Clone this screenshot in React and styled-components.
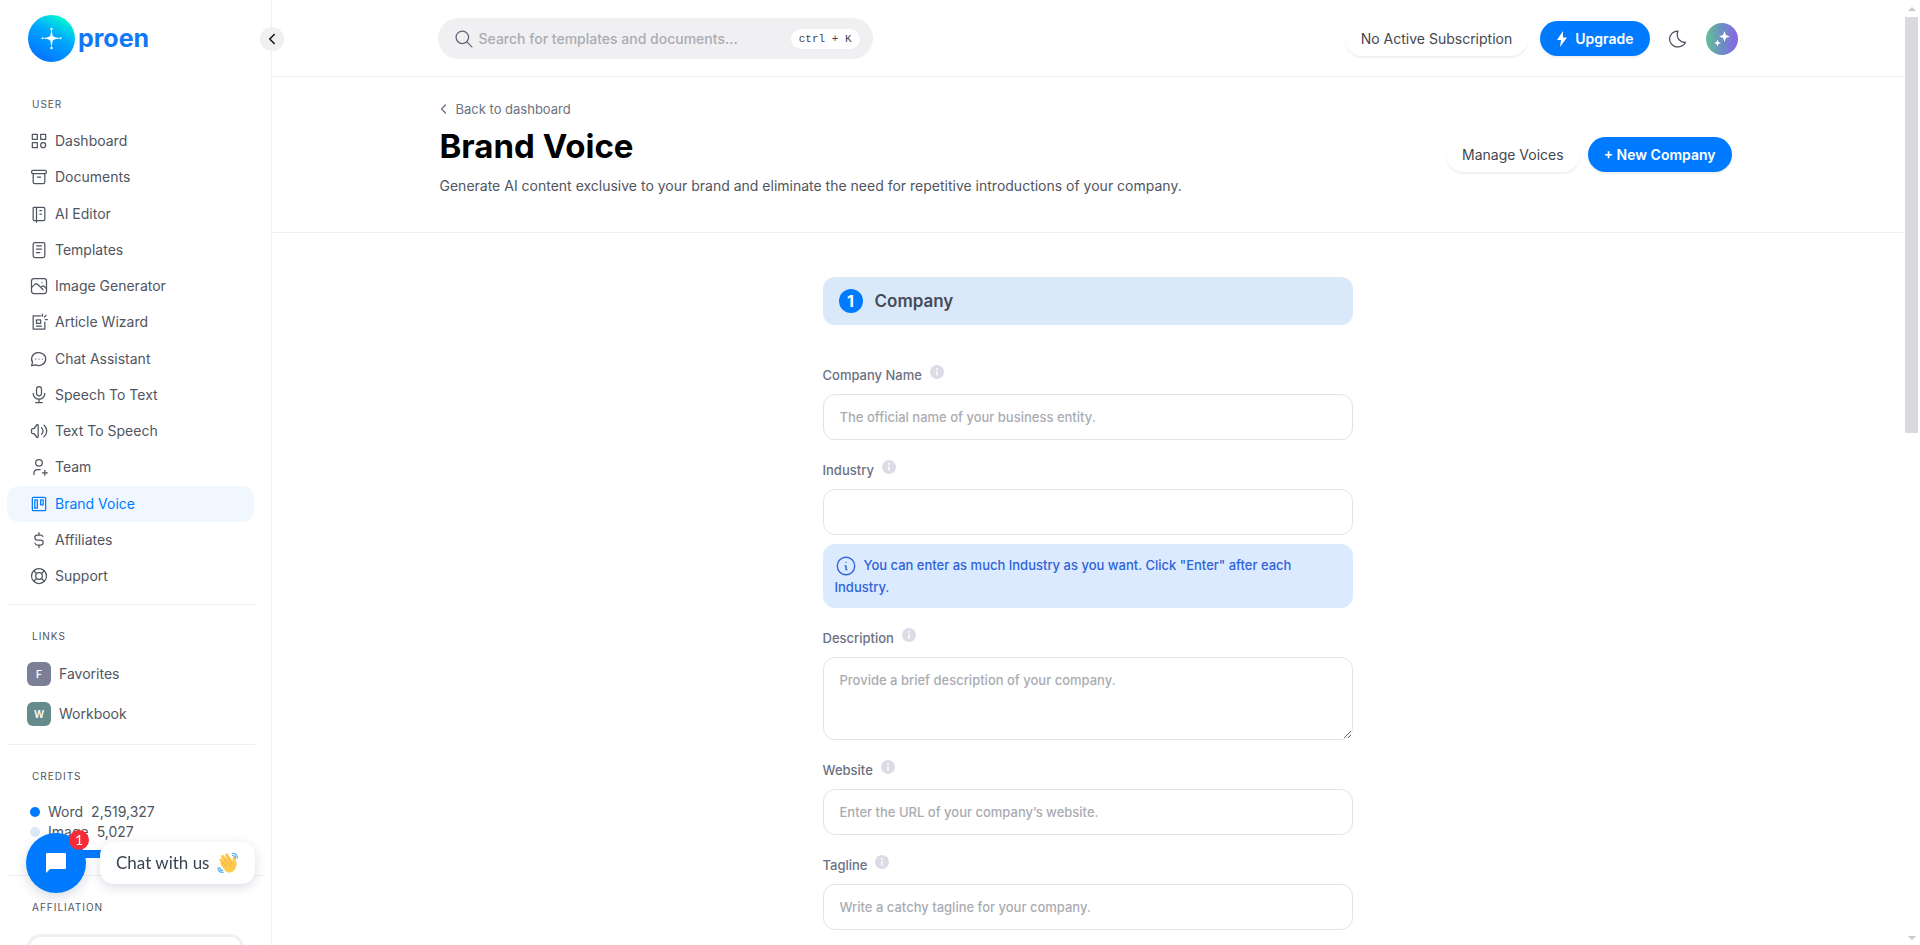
import React, { useState } from 'react';
import styled, { createGlobalStyle } from 'styled-components';

const GlobalStyle = createGlobalStyle`
    * {
        box-sizing: border-box;
    }

    body {
        margin: 0;
        background: #fff;
        color: #50555f;
        font-family: Inter, 'Liberation Sans', sans-serif;
        font-size: 14px;
        line-height: 20px;
        overflow: hidden;
    }

    h1, p, ul {
        margin: 0;
        padding: 0;
    }

    a {
        color: inherit;
        text-decoration: none;
    }

    button, input, textarea {
        font-family: inherit;
    }
`;

const icons = {
    category: (
        <>
            <path d='M4 4h6v6H4zM14 4h6v6h-6zM4 14h6v6H4z' />
            <circle cx='17' cy='17' r='3' />
        </>
    ),
    archive: (
        <>
            <rect x='3' y='4' width='18' height='4' rx='2' />
            <path d='M5 8v10a2 2 0 0 0 2 2h10a2 2 0 0 0 2-2V8M10 12h4' />
        </>
    ),
    notebook: (
        <path d='M6 4h11a2 2 0 0 1 2 2v12a2 2 0 0 1-2 2H6a1 1 0 0 1-1-1V5a1 1 0 0 1 1-1M9 4v18M13 8h2M13 12h2' />
    ),
    notes: (
        <>
            <rect x='5' y='3' width='14' height='18' rx='2' />
            <path d='M9 7h6M9 11h6M9 15h4' />
        </>
    ),
    photo: (
        <>
            <rect x='3' y='3' width='18' height='18' rx='3' />
            <path d='M3 14l4-4c1-.9 2-.9 3 0l4 3.500 1.500-1c1-.9 2-.9 3 0l2.500 3M14 13.500l3 3M15.500 8h.01' />
        </>
    ),
    wizard: (
        <path d='M14 4.500H5V20.500h14V12M9 9.500h5v4H9zM9 17h6M16 5V2.500M18.500 6l2-2M19.500 9H22' />
    ),
    chat: (
        <path d='M3 20l1.300-3.900A8.500 7.800 0 1 1 7.700 19zM8 12h.01M12 12h.01M16 12h.01' />
    ),
    mic: (
        <>
            <rect x='9' y='2' width='6' height='11' rx='3' />
            <path d='M5 10a7 7 0 0 0 14 0M8 21h8M12 17v4' />
        </>
    ),
    speaker: (
        <path d='M3 10.500v3c0 1 .8 1.500 1.500 1.500H6l3.500 4.500c.6.7 1.500.3 1.500-.5V5c0-.8-.9-1.200-1.500-.5L6 9H4.500C3.800 9 3 9.500 3 10.500M15 8c2.400 2 2.400 6 0 8M18 5c4.400 4 4.400 10 0 14' />
    ),
    userPlus: (
        <>
            <circle cx='12' cy='7' r='4' />
            <path d='M6 21v-2a4 4 0 0 1 4-4h3.500M16 19h6M19 16v6' />
        </>
    ),
    trello: (
        <>
            <rect x='4' y='4' width='16' height='16' rx='1.500' />
            <path d='M7 7h3v10H7zM14 7h3v6h-3z' />
        </>
    ),
    dollar: (
        <path d='M16.700 8A3 3 0 0 0 14 6h-4a3 3 0 0 0 0 6h4a3 3 0 0 1 0 6h-4a3 3 0 0 1-2.700-2M12 3v3M12 18v3' />
    ),
    lifebuoy: (
        <>
            <circle cx='12' cy='12' r='4' />
            <circle cx='12' cy='12' r='9' />
            <path d='M15 15l3.350 3.350M9 15l-3.350 3.350M5.650 5.650L9 9M18.350 5.650L15 9' />
        </>
    ),
    search: (
        <>
            <circle cx='10' cy='10' r='7.500' />
            <path d='M21.500 21.500l-6-6' />
        </>
    ),
    chevronLeft: <path d='M15 6l-6 6 6 6' />,
    moon: (
        <path d='M11 2.500a10 9.500 0 1 0 10 13.500c-7 .5-12-6-9-13.500z' />
    ),
    info: (
        <>
            <circle cx='12' cy='12' r='9.500' />
            <path d='M12 8h.01M11 12h1v4h1' />
        </>
    ),
};

const Icon = ({ name, size = 20, width = 1.5 }) => (
    <svg
        width={size}
        height={size}
        viewBox='0 0 24 24'
        fill='none'
        stroke='currentColor'
        strokeWidth={width}
        strokeLinecap='round'
        strokeLinejoin='round'
        aria-hidden='true'
    >
        {icons[name]}
    </svg>
);

const LogoMark = () => (
    <svg width='47' height='47' viewBox='0 0 47 47' aria-hidden='true'>
        <defs>
            <linearGradient id='mark' x1='0.8' y1='0.1' x2='0.3' y2='1'>
                <stop offset='0' stopColor='#00f5d4' />
                <stop offset='0.4' stopColor='#00a6ff' />
                <stop offset='1' stopColor='#0572ff' />
            </linearGradient>
        </defs>
        <circle cx='23.500' cy='23.500' r='23.500' fill='url(#mark)' />
        <g fill='#fff'>
            <path d='M23.500 14l1.200 7 2.300 1.300 5.500 1-5.500 1-2.300 1.200-1.200 7-1.200-7-2.300-1.200-5.500-1 5.500-1 2.300-1.300z' />
            <circle cx='23.500' cy='14' r='1.200' />
            <circle cx='23.500' cy='33' r='1.200' />
            <circle cx='14.500' cy='23.300' r='1' />
            <circle cx='32.500' cy='23.300' r='1' />
        </g>
    </svg>
);

const BackChevron = () => (
    <svg width='7' height='10' viewBox='0 0 7 10' aria-hidden='true'>
        <path
            d='M5.500 1L1.500 5l4 4'
            fill='none'
            stroke='currentColor'
            strokeWidth='1.300'
            strokeLinecap='round'
            strokeLinejoin='round'
        />
    </svg>
);

const InfoDot = () => (
    <svg width='14' height='14' viewBox='0 0 14 14' aria-hidden='true'>
        <circle cx='7' cy='7' r='7' fill='#dcdce6' />
        <circle cx='7' cy='4' r='1' fill='#fff' />
        <path d='M7 6.200v4.300' stroke='#fff' strokeWidth='1.500' />
    </svg>
);

const WavingHand = () => (
    <svg width='22' height='22' viewBox='0 0 22 22' aria-hidden='true'>
        <g stroke='#ffcb4c' strokeWidth='3.200' strokeLinecap='round'>
            <path d='M4 8l6 7M5.500 4.500l7 8M9.500 3l5.500 8' />
            <path d='M17.500 5.500c-1 2 0 4 .5 7' />
        </g>
        <path
            d='M3 11.500l9-6 4 5 3-1c1 4 0 7-2 9-3 3-7 2.500-9 0z'
            fill='#ffcb4c'
        />
        <path
            d='M6.500 6.500l5 6M9.800 4.800l4.200 5.700M5 9.500l5 6M15.500 10.500c-2 1-2.500 3-1.500 5'
            fill='none'
            stroke='#e9a93a'
            strokeWidth='0.800'
        />
        <path
            d='M15 1.500c3-.5 5 1.500 5.500 4.500M15.500 3.500c1.800 0 3 1 3.200 2.800M1 15.500c0 3 2 5 5 5M2.800 15.500c0 1.800 1.200 3 3 3.200'
            fill='none'
            stroke='#5dadec'
            strokeWidth='1.200'
            strokeLinecap='round'
        />
    </svg>
);

const navItems = [
    ['category', 'Dashboard'],
    ['archive', 'Documents'],
    ['notebook', 'AI Editor'],
    ['notes', 'Templates'],
    ['photo', 'Image Generator'],
    ['wizard', 'Article Wizard'],
    ['chat', 'Chat Assistant'],
    ['mic', 'Speech To Text'],
    ['speaker', 'Text To Speech'],
    ['userPlus', 'Team'],
    ['trello', 'Brand Voice'],
    ['dollar', 'Affiliates'],
    ['lifebuoy', 'Support'],
];

const Sidebar = () => (
    <SidebarWrapper>
        <Logo href='#'>
            <LogoMark />
            proen
        </Logo>
        <CollapseButton type='button' aria-label='Collapse sidebar'>
            <Icon name='chevronLeft' size={18} width={2} />
        </CollapseButton>
        <SidebarTitle $first>User</SidebarTitle>
        <NavList>
            {navItems.map(([icon, name]) => (
                <li key={name}>
                    <NavLink href='#' $active={name === 'Brand Voice'}>
                        <Icon name={icon} />
                        {name}
                    </NavLink>
                </li>
            ))}
        </NavList>
        <Divider />
        <SidebarTitle>Links</SidebarTitle>
        <LinkList>
            <li>
                <QuickLink href='#'>
                    <Letter $color='#7b8096'>F</Letter>
                    Favorites
                </QuickLink>
            </li>
            <li>
                <QuickLink href='#'>
                    <Letter $color='#658c8a'>W</Letter>
                    Workbook
                </QuickLink>
            </li>
        </LinkList>
        <Divider />
        <SidebarTitle>Credits</SidebarTitle>
        <Credits>
            <Credit $color='#007bff'>
                Word <span>2,519,327</span>
            </Credit>
            <Credit $color='#dae8f8'>
                Image <span>5,027</span>
            </Credit>
            <CreditBar />
        </Credits>
        <Divider $wide />
        <SidebarTitle>Affiliation</SidebarTitle>
        <AffiliateCard />
    </SidebarWrapper>
);

const Header = () => (
    <HeaderBar>
        <HeaderInner>
            <SearchBox>
                <Icon name='search' />
                <SearchInput
                    type='search'
                    aria-label='Search'
                    placeholder='Search for templates and documents...'
                />
                <Shortcut>ctrl + K</Shortcut>
            </SearchBox>
            <HeaderActions>
                <Button type='button'>No Active Subscription</Button>
                <Button type='button' $primary>
                    <svg width='12' height='16' viewBox='0 0 12 16' aria-hidden='true'>
                        <path d='M7 0L1 9h4l-1 7 7-9.500H7z' fill='currentColor' />
                    </svg>
                    Upgrade
                </Button>
                <IconButton type='button' aria-label='Dark mode'>
                    <Icon name='moon' />
                </IconButton>
                <Avatar type='button' aria-label='Account'>
                    <svg width='18' height='18' viewBox='0 0 18 18' aria-hidden='true'>
                        <path
                            d='M11.500 1l1.400 4 4.100 1.500-4.100 1.500-1.400 4-1.400-4L6 6.500 10.100 5zM4.500 9.500l.9 2.600 2.600.9-2.600.9-.9 2.600-.9-2.600L1 13l2.600-.9z'
                            fill='#fff'
                        />
                    </svg>
                </Avatar>
            </HeaderActions>
        </HeaderInner>
    </HeaderBar>
);

const Field = ({ id, label, placeholder, multiline, hint }) => {
    const [value, setValue] = useState('');

    return (
        <FieldWrapper>
            <LabelRow>
                <label htmlFor={id}>{label}</label>
                <InfoDot />
            </LabelRow>
            <TextBox
                as={multiline ? 'textarea' : 'input'}
                id={id}
                $multiline={multiline}
                placeholder={placeholder}
                value={value}
                onChange={(e) => setValue(e.target.value)}
            />
            {hint && (
                <Hint>
                    <Icon name='info' size={22} />
                    {hint}
                </Hint>
            )}
        </FieldWrapper>
    );
};

const Chat = () => (
    <ChatWidget>
        <ChatButton type='button' aria-label='Open chat'>
            <svg width='20' height='20' viewBox='0 0 20 20' aria-hidden='true'>
                <path d='M1 0h18a1 1 0 0 1 1 1v14a1 1 0 0 1-1 1H4l-4 4V1a1 1 0 0 1 1-1z' fill='#fff' />
            </svg>
            <ChatBadge>1</ChatBadge>
        </ChatButton>
        <ChatBubble>
            Chat with us
            <WavingHand />
        </ChatBubble>
    </ChatWidget>
);

const App = () => {
    return (
        <>
            <GlobalStyle />
            <Page>
                <Sidebar />
                <Main>
                    <Header />
                    <TitleBar>
                        <TitleInner>
                            <div>
                                <BackLink href='#'>
                                    <BackChevron />
                                    Back to dashboard
                                </BackLink>
                                <Title>Brand Voice</Title>
                                <p>
                                    Generate AI content exclusive to your brand and
                                    eliminate the need for repetitive introductions
                                    of your company.
                                </p>
                            </div>
                            <TitleActions>
                                <Button type='button'>Manage Voices</Button>
                                <Button type='button' $primary>
                                    + New Company
                                </Button>
                            </TitleActions>
                        </TitleInner>
                    </TitleBar>
                    <Form>
                        <Step>
                            <StepNumber>1</StepNumber>
                            Company
                        </Step>
                        <Field
                            id='name'
                            label='Company Name'
                            placeholder='The official name of your business entity.'
                        />
                        <Field
                            id='industry'
                            label='Industry'
                            hint='You can enter as much Industry as you want. Click "Enter" after each Industry.'
                        />
                        <Field
                            id='description'
                            label='Description'
                            placeholder='Provide a brief description of your company.'
                            multiline
                        />
                        <Field
                            id='website'
                            label='Website'
                            placeholder='Enter the URL of your company’s website.'
                        />
                        <Field
                            id='tagline'
                            label='Tagline'
                            placeholder='Write a catchy tagline for your company.'
                        />
                    </Form>
                </Main>
                <ScrollTrack>
                    <ScrollArrow />
                    <ScrollThumb />
                    <ScrollArrow $down />
                </ScrollTrack>
            </Page>
            <Chat />
        </>
    );
};

export default App;

const Page = styled.div`
    display: flex;
    height: 100vh;
    overflow: hidden;
`;

const SidebarWrapper = styled.aside`
    position: relative;
    flex: none;
    width: 272px;
    padding: 15px 8px 0 7px;
    border-right: 1px solid #f0f0f2;
`;

const Logo = styled.a`
    display: flex;
    align-items: center;
    gap: 3px;
    padding-left: 21px;
    color: #0f78f7;
    font-size: 25px;
    font-weight: 700;
    line-height: 47px;
`;

const CollapseButton = styled.button`
    position: absolute;
    top: 27px;
    right: -13px;
    display: flex;
    align-items: center;
    justify-content: center;
    width: 24px;
    height: 24px;
    padding: 0;
    border: none;
    border-radius: 50%;
    background: #f0f0f2;
    color: #111;
`;

const SidebarTitle = styled.div`
    padding: ${(props) => (props.$first ? '35px 25px 12px' : '24px 25px 12px')};
    font-size: 10px;
    letter-spacing: 1px;
    line-height: 14px;
    text-transform: uppercase;
`;

const NavList = styled.ul`
    display: grid;
    align-content: space-between;
    min-height: 471px;
    width: 247px;
    list-style: none;
`;

const NavLink = styled.a`
    display: flex;
    align-items: center;
    gap: 6px;
    height: 36px;
    padding: 0 22px;
    border-radius: 12px;
    background: ${(props) => (props.$active ? '#f0f7ff' : 'transparent')};
    color: ${(props) => (props.$active ? '#007bff' : 'inherit')};
`;

const Divider = styled.hr`
    width: ${(props) => (props.$wide ? '256px' : '248px')};
    margin: 10px 0 0;
    border: none;
    border-top: 1px solid #f0f0f2;
`;

const LinkList = styled.ul`
    display: grid;
    gap: 16px;
    padding: 7px 20px 8px;
    list-style: none;
`;

const QuickLink = styled.a`
    display: flex;
    align-items: center;
    gap: 8px;
`;

const Letter = styled.span`
    width: 24px;
    height: 24px;
    border-radius: 6px;
    background: ${(props) => props.$color};
    color: #fff;
    font-size: 10px;
    font-weight: 600;
    line-height: 24px;
    text-align: center;
`;

const Credits = styled.div`
    padding: 7px 23px;
`;

const Credit = styled.div`
    display: flex;
    align-items: center;
    gap: 8px;

    &::before {
        content: '';
        width: 10px;
        height: 10px;
        border-radius: 50%;
        background: ${(props) => props.$color};
    }
`;

const CreditBar = styled.div`
    height: 8px;
    margin-top: 8px;
    border-radius: 4px;
    background: #007bff;
`;

const AffiliateCard = styled.div`
    width: 217px;
    height: 160px;
    margin: 8px 20px;
    border: 3px solid #f0f0f2;
    border-radius: 14px;
`;

const Main = styled.main`
    flex: 1;
    min-width: 0;
`;

const HeaderBar = styled.header`
    border-bottom: 1px solid #f0f0f2;
    padding: 18px 20px 17px;
`;

const HeaderInner = styled.div`
    display: flex;
    align-items: center;
    justify-content: space-between;
    max-width: 1300px;
    margin: 0 auto;
`;

const SearchBox = styled.div`
    display: flex;
    align-items: center;
    gap: 5px;
    width: 435px;
    height: 41px;
    padding: 0 13px 0 16px;
    border-radius: 21px;
    background: #f0f0f3;
    color: #5b6478;
`;

const SearchInput = styled.input`
    flex: 1;
    min-width: 0;
    padding: 0;
    border: none;
    outline: none;
    background: transparent;
    font-size: 14px;
    font-weight: 500;

    &::placeholder {
        color: #aaacb2;
    }
`;

const Shortcut = styled.kbd`
    padding: 0 8px;
    border-radius: 10px;
    background: #fff;
    color: #3f434c;
    font-family: 'Liberation Mono', monospace;
    font-size: 11px;
    line-height: 20px;
`;

const HeaderActions = styled.div`
    display: flex;
    align-items: center;
    gap: 12px;
`;

const Button = styled.button`
    display: flex;
    align-items: center;
    gap: 7px;
    height: 35px;
    padding: 0 16px;
    border: none;
    border-radius: 18px;
    background: ${(props) => (props.$primary ? '#007bff' : '#fff')};
    box-shadow: 0 2px 2px rgba(30, 40, 50, 0.07);
    color: ${(props) => (props.$primary ? '#fff' : '#43474f')};
    font-size: 14px;
    font-weight: ${(props) => (props.$primary ? 600 : 400)};
    white-space: nowrap;
    cursor: pointer;
`;

const IconButton = styled.button`
    display: flex;
    margin: 0 6px;
    padding: 0;
    border: none;
    background: none;
    color: #4c515c;
`;

const Avatar = styled.button`
    display: flex;
    align-items: center;
    justify-content: center;
    width: 32px;
    height: 32px;
    padding: 0;
    border: none;
    border-radius: 50%;
    background: linear-gradient(90deg, #63bf96, #6d8ec4 50%, #8a63e8);
`;

const TitleBar = styled.section`
    padding: 22px 20px 36px;
    border-bottom: 1px solid #f0f0f2;
`;

const TitleInner = styled.div`
    display: flex;
    align-items: center;
    justify-content: space-between;
    max-width: 1300px;
    margin: 0 auto;
    padding: 0 6px 0 2px;
`;

const BackLink = styled.a`
    display: flex;
    align-items: center;
    gap: 9px;
    color: #6b7280;
    font-size: 13px;
    line-height: 20px;
`;

const Title = styled.h1`
    margin: 7px 0 10px;
    color: #000;
    font-size: 33px;
    font-weight: 700;
    line-height: 40px;
`;

const TitleActions = styled.div`
    display: flex;
    gap: 8px;
    padding-top: 14px;
`;

const Form = styled.form`
    max-width: 530px;
    margin: 44px auto 0;
`;

const Step = styled.div`
    display: flex;
    align-items: center;
    gap: 12px;
    height: 48px;
    margin-bottom: 39px;
    padding: 0 16px;
    border-radius: 12px;
    background: #dae9f9;
    color: #454b57;
    font-size: 17px;
    font-weight: 600;
`;

const StepNumber = styled.span`
    width: 24px;
    height: 24px;
    border-radius: 50%;
    background: #007bff;
    color: #fff;
    font-size: 16px;
    font-weight: 700;
    line-height: 24px;
    text-align: center;
`;

const FieldWrapper = styled.div`
    margin-bottom: 19px;
`;

const LabelRow = styled.div`
    display: flex;
    align-items: flex-start;
    gap: 8px;
    height: 30px;
    padding-top: 1px;
    color: #6b7183;
    font-size: 13px;
    font-weight: 500;
    line-height: 20px;
`;

const TextBox = styled.input`
    display: block;
    width: 100%;
    height: ${(props) => (props.$multiline ? '83px' : '46px')};
    padding: ${(props) => (props.$multiline ? '12px 16px' : '0 16px')};
    border: 1px solid #e2e3e6;
    border-radius: 12px;
    outline: none;
    background: #fff;
    color: #3f434c;
    font-size: 13px;
    font-weight: 500;
    line-height: 20px;

    &::placeholder {
        color: #aaacb2;
    }
`;

const Hint = styled.p`
    margin-top: 9px;
    padding: 11px 40px 10px 12px;
    border-radius: 12px;
    background: #dbeafe;
    color: #2f63d8;
    font-size: 13px;
    font-weight: 500;
    line-height: 21px;

    svg {
        margin-right: 7px;
        vertical-align: middle;
    }
`;

const ScrollTrack = styled.div`
    display: flex;
    flex: none;
    flex-direction: column;
    align-items: center;
    width: 17px;
    padding: 7px 0 5px;
`;

const ScrollArrow = styled.div`
    border: 4px solid transparent;
    border-top-width: ${(props) => (props.$down ? '4px' : '0')};
    border-bottom-width: ${(props) => (props.$down ? '0' : '4px')};
    border-${(props) => (props.$down ? 'top' : 'bottom')}-color: #c9cbce;
    margin-top: ${(props) => (props.$down ? 'auto' : '0')};
`;

const ScrollThumb = styled.div`
    width: 13px;
    height: 44vh;
    margin-top: 6px;
    background: #d8dadf;
`;

const ChatWidget = styled.div`
    position: fixed;
    bottom: 52px;
    left: 26px;
    display: flex;
    align-items: center;
    gap: 14px;
`;

const ChatButton = styled.button`
    position: relative;
    display: flex;
    align-items: center;
    justify-content: center;
    width: 60px;
    height: 60px;
    padding: 0;
    border: none;
    border-radius: 50%;
    background: #007bff;
    box-shadow: 0 4px 12px rgba(20, 40, 80, 0.16);
`;

const ChatBadge = styled.span`
    position: absolute;
    top: -3px;
    right: -3px;
    width: 20px;
    height: 20px;
    border-radius: 50%;
    background: #f52b38;
    color: #fff;
    font-family: Lato, sans-serif;
    font-size: 14px;
    line-height: 20px;
`;

const ChatBubble = styled.div`
    display: flex;
    align-items: center;
    gap: 8px;
    height: 42px;
    padding: 0 16px;
    border-radius: 14px;
    background: #fff;
    box-shadow: 0 3px 12px rgba(20, 40, 80, 0.16);
    color: #3a4354;
    font-family: Lato, sans-serif;
    font-size: 17px;
`;
